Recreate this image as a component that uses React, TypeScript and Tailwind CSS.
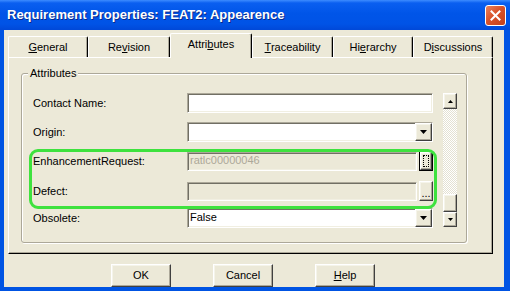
import React from 'react';

const raised =
  'border border-t-white border-l-white border-r-[#404040] border-b-[#404040] shadow-[inset_-1px_-1px_0_#aca899,inset_1px_1px_0_#f5f4ea] bg-[#ece9d8]';
const sunken =
  'border border-t-[#aca899] border-l-[#aca899] border-r-white border-b-white shadow-[inset_1px_1px_0_#716f64,inset_-1px_-1px_0_#f1efe2]';

const DownTri = ({ w = 7, h = 4 }: { w?: number; h?: number }) => (
  <svg width={w} height={h} viewBox={`0 0 ${w} ${h}`}>
    <polygon points={`0,0 ${w},0 ${w / 2},${h}`} fill="#000" />
  </svg>
);

const UpTri = ({ w = 5, h = 3 }: { w?: number; h?: number }) => (
  <svg width={w} height={h} viewBox={`0 0 ${w} ${h}`}>
    <polygon points={`0,${h} ${w},${h} ${w / 2},0`} fill="#000" />
  </svg>
);

type TabItem = { label: React.ReactNode; cls: string; active?: boolean };

const tabs: TabItem[] = [
  { label: <><u>G</u>eneral</>, cls: 'w-[80px]' },
  { label: <>Re<u>v</u>ision</>, cls: 'w-[82px]' },
  { label: <>Attri<u>b</u>utes</>, cls: 'w-[82px]', active: true },
  { label: <><u>T</u>raceability</>, cls: 'w-[81px]' },
  { label: <>Hi<u>e</u>rarchy</>, cls: 'w-[80px]' },
  { label: <>D<u>i</u>scussions</>, cls: 'w-[80px]' },
];

const Combo = ({ value }: { value?: string }) => (
  <div className={`${sunken} bg-white flex h-[20px] w-[246px]`}>
    <div className="flex-1 pl-[2px] leading-[16px]">{value}</div>
    <div className={`${raised} w-[17px] flex items-center justify-center`}>
      <DownTri />
    </div>
  </div>
);

const Row = ({ label, children, cls }: { label: string; children: React.ReactNode; cls: string }) => (
  <div className={`flex items-center h-[20px] ${cls}`}>
    <div className="w-[154px]">{label}</div>
    {children}
  </div>
);

const App: React.FC = () => {
  return (
    <div className="relative w-[510px] h-[291px] overflow-hidden bg-[#0054e3] flex flex-col font-['Liberation_Sans',Arial,sans-serif] text-[11px] text-black">
      {/* title bar */}
      <div className="h-[30px] flex items-center justify-between pl-[7px] pr-[4px] bg-[linear-gradient(to_bottom,#3d8cff_0%,#0a5ff0_10%,#0055e8_45%,#0053e6_80%,#0048d8_100%)]">
        <span className="text-white font-bold text-[13px] [text-shadow:1px_1px_0_#0a2a8a]">
          Requirement Properties: FEAT2: Appearence
        </span>
        <div className="w-[21px] h-[21px] rounded-[3px] border border-white bg-[linear-gradient(135deg,#e8835f_0%,#d9522a_45%,#c4401a_100%)] flex items-center justify-center">
          <svg width="11" height="11" viewBox="0 0 11 11">
            <path d="M1.5 1.5 L9.5 9.5 M9.5 1.5 L1.5 9.5" stroke="#fff" strokeWidth="2" strokeLinecap="square" />
          </svg>
        </div>
      </div>

      {/* body */}
      <div className="flex-1 ml-[4px] mr-[6px] mb-[4px] bg-[#ece9d8] flex flex-col">
        {/* tabs */}
        <div className="h-[27px] flex items-end pl-[4px]">
          {tabs.map((t, i) => (
            <div
              key={i}
              className={`${t.cls} ${
                t.active ? 'h-[25px] -mb-px relative z-10' : 'h-[21px]'
              } bg-[#ece9d8] rounded-t-[2px] border-t border-l border-r border-t-white border-l-white border-r-black shadow-[inset_-1px_0_0_#aca899] flex items-center justify-center ${
                t.active ? 'pb-[3px]' : ''
              }`}
            >
              <span>{t.label}</span>
            </div>
          ))}
        </div>

        {/* panel */}
        <div className="ml-[4px] w-[485px] h-[197px] border border-t-white border-l-white border-r-black border-b-black shadow-[inset_-1px_-1px_0_#aca899]">
          <div className="ml-[12px] mt-[15px] w-[446px] h-[170px] relative rounded-[3px] border border-[#aca899] shadow-[1px_1px_0_#fff,inset_1px_1px_0_#fff]">
            <span className="absolute left-[6px] top-[-8px] px-[2px] bg-[#ece9d8] leading-[14px]">Attributes</span>
            <div className="flex pt-[19px] pl-[11px]">
              <div className="w-[400px] flex flex-col">
                <Row label="Contact Name:" cls="">
                  <div className={`${sunken} bg-white h-[20px] w-[246px]`} />
                </Row>
                <Row label="Origin:" cls="mt-[9px]">
                  <Combo />
                </Row>
                <Row label="EnhancementRequest:" cls="mt-[9px]">
                  <div className={`${sunken} h-[19px] w-[230px] text-[#aca899] pl-[2px] leading-[15px]`}>ratlc00000046</div>
                  <div className="ml-[2px] w-[14px] h-[20px] border border-black">
                    <div className={`${raised} w-full h-full p-[2px]`}>
                      <div className="w-full h-full border border-dotted border-black" />
                    </div>
                  </div>
                </Row>
                <Row label="Defect:" cls="mt-[10px]">
                  <div className={`${sunken} h-[19px] w-[230px]`} />
                  <div className={`${raised} ml-[2px] w-[14px] h-[20px] flex items-end justify-center leading-[14px]`}>...</div>
                </Row>
                <Row label="Obsolete:" cls="mt-[7px]">
                  <Combo value="False" />
                </Row>
              </div>
              {/* scroll bar */}
              <div className="ml-[10px] w-[14px] h-[134px] flex flex-col">
                <div className={`${raised} h-[16px] flex items-center justify-center`}>
                  <UpTri />
                </div>
                <div className="flex-1 bg-[repeating-conic-gradient(#ffffff_0%_25%,#e4e1d2_0%_50%)] bg-[length:2px_2px]" />
                <div className={`${raised} h-[18px]`} />
                <div className={`${raised} h-[15px] flex items-center justify-center`}>
                  <DownTri w={5} h={3} />
                </div>
              </div>
            </div>
          </div>
        </div>

        {/* buttons */}
        <div className="mt-[10px] flex gap-[42px] pl-[107px]">
          <button className={`${raised} w-[60px] h-[23px]`}>OK</button>
          <button className={`${raised} w-[60px] h-[23px]`}>Cancel</button>
          <button className={`${raised} w-[60px] h-[23px]`}>
            <u>H</u>elp
          </button>
        </div>
      </div>

      {/* highlight annotation */}
      <div className="absolute left-[29px] top-[149px] w-[408px] h-[60px] border-[3px] border-[#3ee23e] rounded-[9px] pointer-events-none" />
    </div>
  );
};

export default App;
